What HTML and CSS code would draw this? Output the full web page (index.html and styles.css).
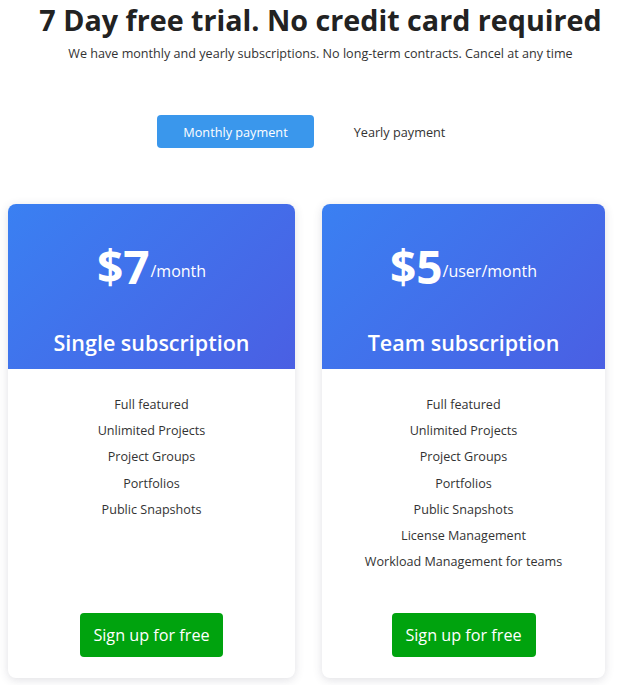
FILE: index.html
```html
<!DOCTYPE html>
<html lang="en">
<head>
    <meta charset="UTF-8">
    <meta name="viewport" content="width=device-width, initial-scale=1.0">
    <title>Pricing</title>
    <link rel="stylesheet" href="styles.css">
</head>
<body>
    <div class="page">
        <header class="intro">
            <h1>7 Day free trial. No credit card required</h1>
            <p>We have monthly and yearly subscriptions. No long-term contracts. Cancel at any time</p>
        </header>

        <!-- period switch -->
        <div class="toggle">
            <button class="toggle-btn active">Monthly payment</button>
            <button class="toggle-btn">Yearly payment</button>
        </div>

        <div class="plans">
            <div class="plan plan-single">
                <div class="plan-head">
                    <div class="price"><span class="amount">$7</span><span class="period">/month</span></div>
                    <h2>Single subscription</h2>
                </div>
                <ul class="features">
                    <li>Full featured</li>
                    <li>Unlimited Projects</li>
                    <li>Project Groups</li>
                    <li>Portfolios</li>
                    <li>Public Snapshots</li>
                </ul>
                <a href="#" class="signup">Sign up for free</a>
            </div>

            <div class="plan plan-team">
                <div class="plan-head">
                    <div class="price"><span class="amount">$5</span><span class="period">/user/month</span></div>
                    <h2>Team subscription</h2>
                </div>
                <ul class="features">
                    <li>Full featured</li>
                    <li>Unlimited Projects</li>
                    <li>Project Groups</li>
                    <li>Portfolios</li>
                    <li>Public Snapshots</li>
                    <li>License Management</li>
                    <li>Workload Management for teams</li>
                </ul>
                <a href="#" class="signup">Sign up for free</a>
            </div>
        </div>
    </div>
</body>
</html>
```

FILE: styles.css
```css
* {
    margin: 0;
    padding: 0;
    box-sizing: border-box;
}

html, body {
    width: 100%;
    height: 100%;
    overflow: hidden;
}

body {
    font-family: "Open Sans", "Liberation Sans", sans-serif;
    color: #333;
    background: #fff;
}

/* 顶部标题 */
.intro {
    text-align: center;
    padding-left: 22px;
}

.intro h1 {
    font-size: 28.7px;
    font-weight: 700;
    line-height: 40px;
    color: #222;
}

.intro p {
    font-size: 12.6px;
    line-height: 18px;
    color: #333;
    margin-top: 5px;
}

/* 月付 / 年付 切换 */
.toggle {
    display: flex;
    gap: 7px;
    margin: 52px 0 0 157px;
}

.toggle-btn {
    width: 157px;
    height: 33px;
    border: none;
    border-radius: 4px;
    background: transparent;
    font-family: inherit;
    font-size: 12.7px;
    color: #333;
    cursor: pointer;
}

.toggle-btn.active {
    background: #3a97ec;
    color: #fff;
}

/* 套餐卡片 */
.plans {
    display: grid;
    grid-template-columns: 287px 283px;
    gap: 27px;
    margin: 56px 0 0 8px;
}

.plan {
    height: 474px;
    display: flex;
    flex-direction: column;
    background: #fff;
    border-radius: 8px;
    overflow: hidden;
    box-shadow: 0 2px 10px rgba(60, 60, 90, 0.16);
}

.plan-head {
    height: 165px;
    background: linear-gradient(135deg, #3a80f2 0%, #4a5fe3 100%);
    color: #fff;
    text-align: center;
    padding-top: 32px;
}

.price {
    line-height: 60px;
}

.amount {
    font-size: 46px;
    font-weight: 700;
}

.period {
    font-size: 16px;
    margin-left: 1px;
    vertical-align: 7px;
}

.plan-team .period {
    margin-left: 0;
}

.plan-head h2 {
    font-size: 21.5px;
    font-weight: 600;
    line-height: 30px;
    margin-top: 20px;
}

.features {
    list-style: none;
    text-align: center;
    padding-top: 23px;
}

.features li {
    font-size: 12.6px;
    line-height: 26.2px;
    color: #333;
}

.signup {
    display: block;
    align-self: center;
    margin-top: auto;
    margin-bottom: 21px;
    width: 143px;
    height: 44px;
    line-height: 44px;
    background: #00a30e;
    color: #fff;
    font-size: 16.2px;
    text-align: center;
    text-decoration: none;
    border-radius: 4px;
}

.plan-team .signup {
    width: 144px;
}
```
